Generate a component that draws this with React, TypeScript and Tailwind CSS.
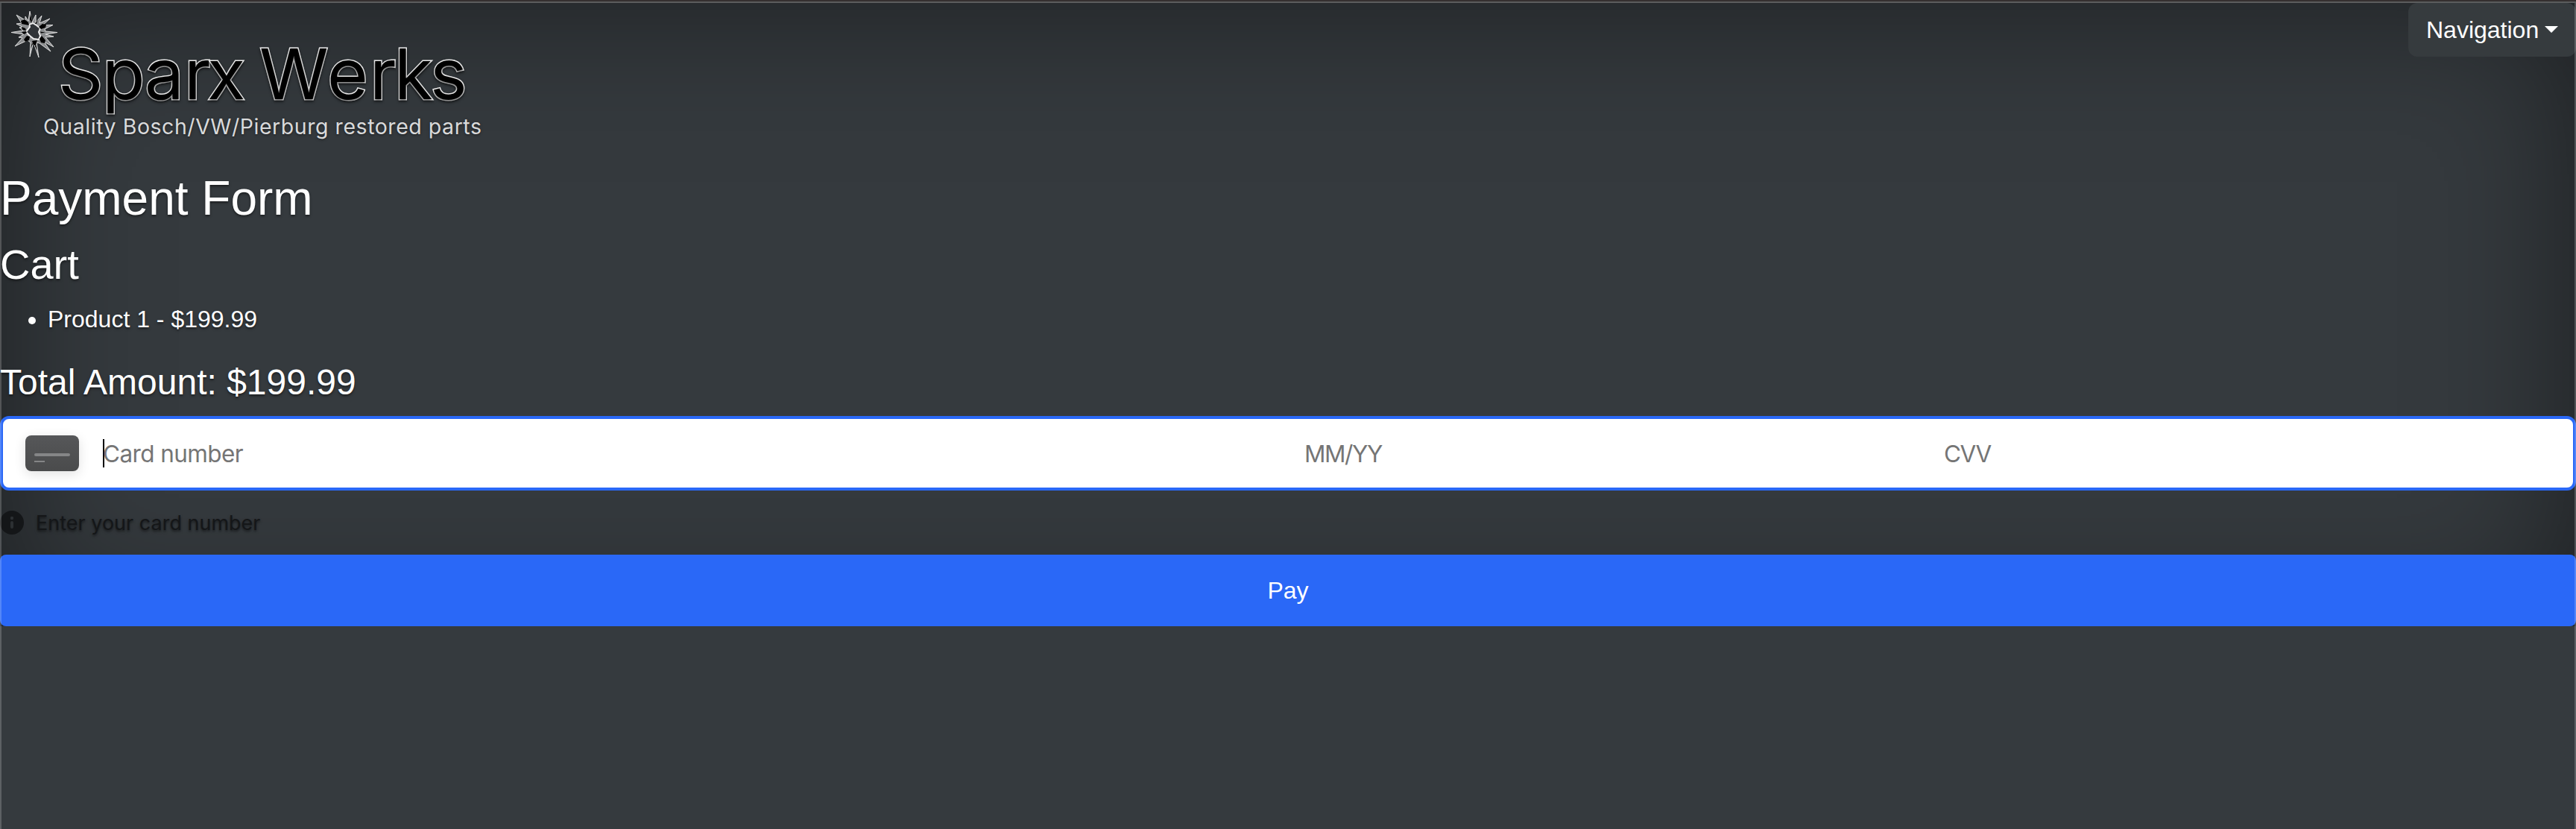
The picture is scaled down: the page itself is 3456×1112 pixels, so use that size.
const burst =
  "M40 15 L43 30 L48 20 L48 30 L56 21 L53 31 L67 25 L57 34 L71 33.500 L60 39 L61 42 L77 43.500 L61 46 L72 49 L61 50 L72 63 L59 56 L68 69 L53 58 L49 57 L52 77 L46 60 L44 60 L40 76 L41 57 L37 54 L20 62 L30 51 L25 50 L32 46 L15 43.500 L31 41 L26 37 L30 36 L22 32 L29 31 L22 20 L34 27 L34 22 L38 28 Z";

function Logo() {
  return (
    <svg className="block h-[200px] w-[660px]" viewBox="0 0 660 200" role="img" aria-label="Sparx Werks">
      <g strokeLinejoin="miter">
        <path d={burst} fill="#8a8c8e" stroke="#dedede" strokeWidth="1" />
        <path
          d="M40 36 L39 33 L44 31 L49 34 L54 38 L52 43 L54 48 L52 53 L45 52 L40 48 L35 43 Z"
          fill="#303438"
          stroke="#ececec"
          strokeWidth="2"
        />
        <path
          d="M28 28 l5 -2 5 4 1 4 -5 -1 -5 -1z M52 36 l5 -4 5 1 -1 4 -6 2z M29 36 l5 2 1 3 -5 -1z M29 43 l6 -1 1 2 -4 2z M32 53 l4 -5 4 1 -1 5 -5 2z M43 55 l7 -1 -2 6 -3 1z M53 52 l3 -4 5 6 -1 4 -5 -1z M54 42.500 l7 1 -6 1z M41 19 l2 9 -1 3 -2 -5z M47 32 l4 -6 -2 6z M41 65 l2 -7 1 1z M48 59 l2 9 -3 -6z"
          fill="#000"
        />
      </g>
      <g
        fontFamily="Inter"
        fontSize="94"
        fill="#000"
        stroke="#ececec"
        strokeWidth="3"
        paintOrder="stroke"
      >
        <text y="133" x="78 137 194 247 278">Sparx</text>
        <text y="133" x="348 439 496 529 577">Werks</text>
      </g>
      <text
        x="58"
        y="179.500"
        fontFamily="Inter"
        fontSize="28.500"
        fill="#d9dadb"
        textLength="588"
        lengthAdjust="spacing"
      >
        Quality Bosch/VW/Pierburg restored parts
      </text>
    </svg>
  );
}

function CardIcon() {
  return (
    <div className="flex h-12 w-[72px] shrink-0 flex-col items-start rounded-lg bg-gradient-to-b from-[#565759] to-[#4a4b4c] px-3 pt-6 shadow-[0_4px_16px_rgba(0,0,0,0.12)]">
      <div className="h-1 w-12 rounded-full bg-[#858687]" />
      <div className="mt-1.5 h-0.5 w-3.5 bg-[#858687]" />
    </div>
  );
}

export default function App() {
  return (
    <div className="relative h-[1112px] w-[3456px] overflow-hidden bg-[#353a3e] pt-1 font-['Liberation_Sans',sans-serif] text-[32px] leading-[48px] text-white">
      <div className="flex h-[836px] flex-col shadow-[inset_0_0_200px_rgba(0,0,0,0.5)] [text-shadow:0_1.6px_3.2px_rgba(0,0,0,0.5)]">
        <header className="flex h-[224px] items-start justify-between">
          <div className="-mt-1">
            <Logo />
          </div>
          <button className="flex h-[72px] w-[225px] items-center gap-2 rounded-xl bg-[#363b3e] pl-6 [text-shadow:none]">
            <span>Navigation</span>
            <span className="-mt-0.5 border-x-[9px] border-t-[9px] border-x-transparent border-t-white" />
          </button>
        </header>

        <h1 className="mb-4 text-[64px] leading-[76.8px]">Payment Form</h1>
        <h2 className="mb-4 text-[56px] leading-[67.2px]">Cart</h2>
        <ul className="mb-8 list-disc pl-16">
          <li>Product 1 - $199.99</li>
        </ul>
        <h3 className="mb-4 text-[48px] leading-[57.6px]">Total Amount: $199.99</h3>

        <div className="flex h-[100px] shrink-0 items-center rounded-xl border-4 border-[#2a68f7] bg-white pl-[30px] font-['Inter',sans-serif] text-[31.5px] tracking-[-0.6px] text-[#757575] [text-shadow:none]">
          <CardIcon />
          <div className="ml-8 flex w-[1612px] items-center">
            <span className="h-[38px] w-0.5 bg-black" />
            <span className="-ml-0.5 pt-0.5">Card number</span>
          </div>
          <div className="w-[858px] pt-0.5 tracking-[-1.4px]">MM/YY</div>
          <div className="pt-0.5 tracking-[-1.4px]">CVV</div>
        </div>

        <div className="mt-[27px] flex h-8 shrink-0 items-center gap-4 font-['Inter',sans-serif] text-[27px] text-[#141618]">
          <svg className="h-8 w-8" viewBox="0 0 32 32">
            <circle cx="16" cy="16" r="16" fill="#141618" />
            <circle cx="16" cy="10" r="2.200" fill="#2c3033" />
            <rect x="14" y="14" width="4" height="10" rx="2" fill="#2c3033" />
          </svg>
          <span className="pt-0.5">Enter your card number</span>
        </div>

        <button className="mt-[27px] h-24 shrink-0 rounded-lg bg-[#2a68f7] [text-shadow:none]">Pay</button>
      </div>
      <div className="pointer-events-none absolute inset-0 border-x-2 border-white/20">
        <div className="-mx-0.5 h-0.5 bg-[#353030]" />
        <div className="-mx-0.5 h-0.5 bg-[#5b5c5d]" />
      </div>
    </div>
  );
}
